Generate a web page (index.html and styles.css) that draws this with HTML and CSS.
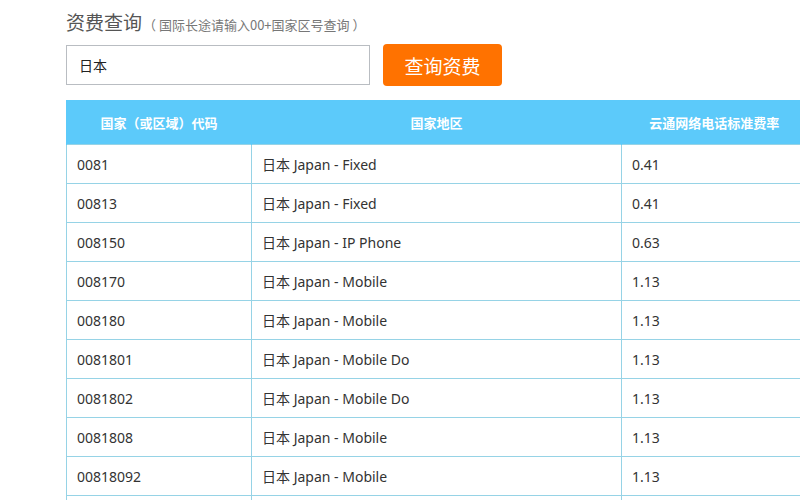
FILE: index.html
```html
<!DOCTYPE html>
<html>
<head>
<meta charset="utf-8">
<link rel="stylesheet" href="styles.css">
</head>
<body>
<div class="page">
  <h1 class="title">资费查询<span class="hint">（ 国际长途请输入00+国家区号查询 ）</span></h1>
  <div class="search">
    <div class="input">日本</div>
    <button class="btn">查询资费</button>
  </div>
  <table class="rates">
    <colgroup><col class="c1"><col class="c2"><col class="c3"></colgroup>
    <thead>
      <tr><th>国家（或区域）代码</th><th>国家地区</th><th>云通网络电话标准费率</th></tr>
    </thead>
    <tbody>
      <tr><td>0081</td><td>日本 Japan - Fixed</td><td>0.41</td></tr>
      <tr><td>00813</td><td>日本 Japan - Fixed</td><td>0.41</td></tr>
      <tr><td>008150</td><td>日本 Japan - IP Phone</td><td>0.63</td></tr>
      <tr><td>008170</td><td>日本 Japan - Mobile</td><td>1.13</td></tr>
      <tr><td>008180</td><td>日本 Japan - Mobile</td><td>1.13</td></tr>
      <tr><td>0081801</td><td>日本 Japan - Mobile Do</td><td>1.13</td></tr>
      <tr><td>0081802</td><td>日本 Japan - Mobile Do</td><td>1.13</td></tr>
      <tr><td>0081808</td><td>日本 Japan - Mobile</td><td>1.13</td></tr>
      <tr><td>00818092</td><td>日本 Japan - Mobile</td><td>1.13</td></tr>
      <tr><td></td><td></td><td></td></tr>
    </tbody>
  </table>
</div>
</body>
</html>
```
FILE: styles.css
```css
html, body {
  margin: 0;
  padding: 0;
  background: #fff;
  overflow: hidden;
  width: 800px;
  height: 500px;
}
.page {
  padding: 7px 0 0 66px;
  font-family: "Noto Sans", "Noto Sans CJK SC", sans-serif;
  color: #333;
}
.title {
  margin: 0;
  padding-top: 2px;
  font-weight: normal;
  font-size: 19px;
  line-height: 26px;
  color: #555;
  font-family: "Noto Sans CJK SC", sans-serif;
}
.hint {
  font-size: 13px;
  color: #777;
  margin-left: 1px;
}
.search {
  display: flex;
  align-items: center;
  margin-top: 6px;
  height: 42px;
}
.input {
  box-sizing: border-box;
  width: 304px;
  height: 40px;
  border: 1px solid #b9bdc2;
  padding: 0 12px;
  line-height: 38px;
  font-size: 14px;
  color: #222;
  font-family: "Noto Sans CJK SC", sans-serif;
}
.btn {
  margin-left: 13px;
  width: 119px;
  height: 42px;
  border: none;
  border-radius: 4px;
  background: #ff7200;
  color: #fff;
  font-size: 19px;
  font-family: "Noto Sans CJK SC", sans-serif;
  padding: 0;
}
.rates {
  margin-top: 14px;
  border-collapse: collapse;
  width: 741px;
  table-layout: fixed;
  font-size: 14px;
}
.c1 { width: 185px; }
.c2 { width: 370px; }
.rates th {
  background: #5ccafa;
  color: #fff;
  font-weight: bold;
  font-size: 13px;
  height: 44px;
  padding: 0;
  text-align: center;
  border-left: 1px solid #5ccafa;
  font-family: "Noto Sans CJK SC", sans-serif;
}
.rates td {
  border: 1px solid #96d3e6;
  height: 38px;
  padding: 0 0 0 10px;
  color: #333;
  white-space: nowrap;
}
```
